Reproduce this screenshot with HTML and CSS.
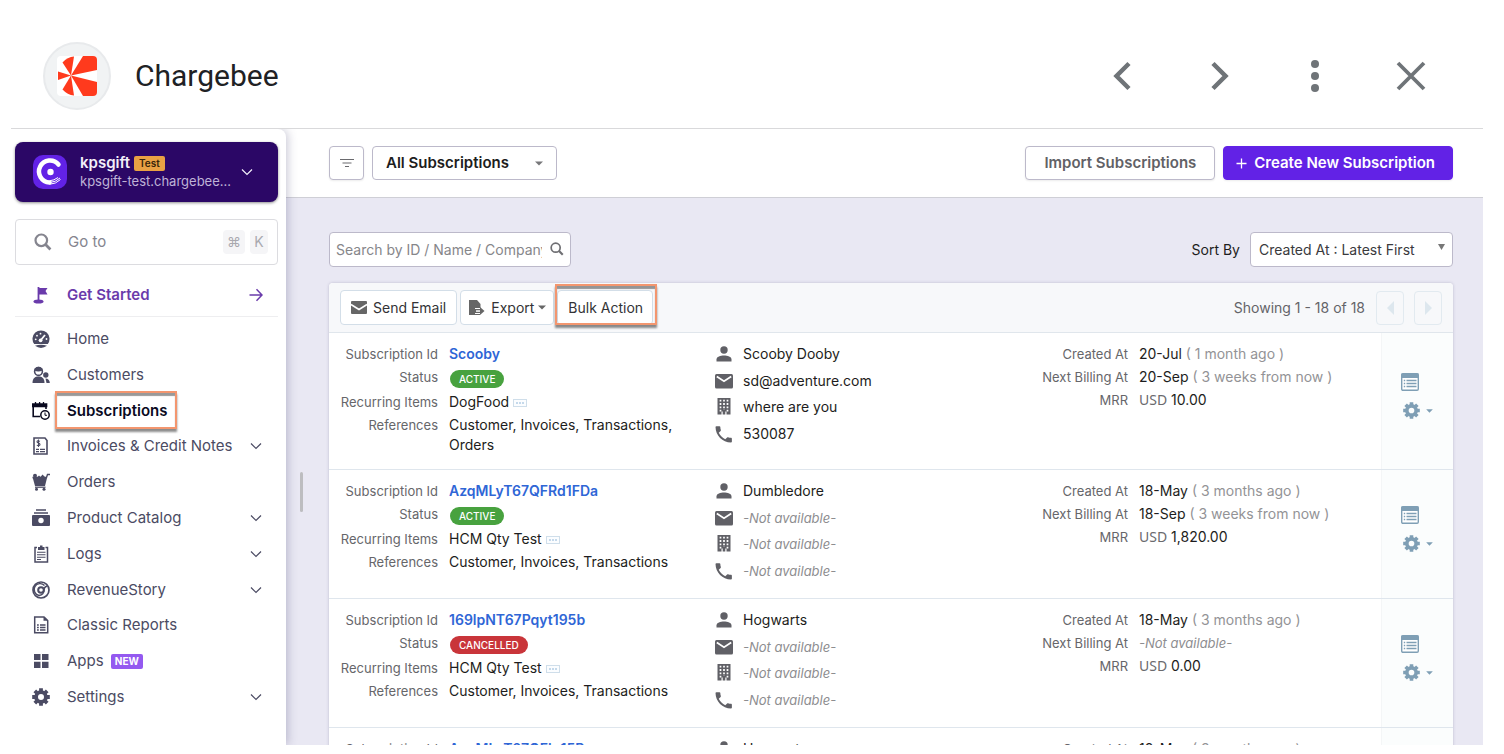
FILE: index.html
```html
<!DOCTYPE html>
<html lang="en">
<head>
<meta charset="utf-8">
<title>Chargebee</title>
<link rel="stylesheet" href="styles.css">
</head>
<body>
<svg class="defs" aria-hidden="true">
  <symbol id="chev" viewBox="0 0 12 8"><path d="M1 1.5 6 6.5 11 1.5" fill="none" stroke="currentColor" stroke-width="1.2"/></symbol>
  <symbol id="caret" viewBox="0 0 10 6"><path d="M0 0.5H10L5 5.5Z" fill="currentColor"/></symbol>
  <symbol id="search" viewBox="0 0 18 18"><circle cx="7.3" cy="7.3" r="5.8" fill="none" stroke="currentColor" stroke-width="2.200"/><path d="M11.6 11.6 16.4 16.4" stroke="currentColor" stroke-width="2.8"/></symbol>
  <symbol id="gear" viewBox="0 0 18 18"><circle cx="9" cy="9" r="4.900" fill="none" stroke="currentColor" stroke-width="3.800"/><path d="M9 0.200V4M9 14V17.800M0.200 9H4M14 9H17.800M2.800 2.800 5 5M13 13 15.200 15.200M15.200 2.800 13 5M5 13 2.800 15.200" stroke="currentColor" stroke-width="3.800"/></symbol>
  <symbol id="person" viewBox="0 0 18 18"><circle cx="9" cy="5" r="3.700" fill="currentColor"/><path d="M1.500 16.500V14.500C1.500 11.500 5.500 10.500 9 10.500S16.500 11.500 16.500 14.500V16.500Z" fill="currentColor"/></symbol>
  <symbol id="mail" viewBox="0 0 18 18"><rect x="0" y="2" width="18" height="14.500" rx="1.500" fill="currentColor"/><path d="M1.800 4.500 9 9.300 16.200 4.500" fill="none" stroke="#fff" stroke-width="1.700"/></symbol>
  <symbol id="building" viewBox="0 0 18 18"><path d="M2.500 0H15.500V16.500H11.500V13.500H10.300V16.500H7.700V13.500H6.500V16.500H2.500Z" fill="currentColor"/><path d="M5.500 1.800V13.800M9 1.800V12M12.500 1.800V13.800" stroke="#fff" stroke-width="1.700" stroke-dasharray="1.800 1.500"/></symbol>
  <symbol id="phone" viewBox="0 0 24 24"><path d="M5 1.500H1.800C1.100 1.500 0.700 2 0.700 2.700C0.700 14 10 23.300 21.300 23.300C22 23.300 22.500 22.800 22.500 22.200V18.200C22.500 17.600 22.100 17.200 21.500 17.100C20 17 18.700 16.700 17.400 16.300C17 16.200 16.500 16.300 16.200 16.600L13.700 19.100C10 17.200 6.900 14.100 5 10.400L7.500 7.900C7.800 7.600 7.900 7.100 7.800 6.700C7.300 5.400 7.100 4.100 7.100 2.700C7.100 2 6.700 1.500 6 1.500Z" fill="currentColor"/></symbol>
  <symbol id="detail" viewBox="0 0 18 18"><rect x="0.700" y="0.700" width="16.600" height="16.600" rx="1.200" fill="#fff" stroke="currentColor" stroke-width="1.400"/><path d="M0.500 0.500H17.500V5H0.500Z" fill="currentColor"/><path d="M5.500 7.500H15.500M5.500 10.500H15.500M5.500 13.500H15.500M2.800 7.500H4.200M2.800 10.500H4.200M2.800 13.500H4.200" stroke="currentColor" stroke-width="1.300"/></symbol>
  <symbol id="more" viewBox="0 0 14 8"><rect x="0.500" y="0.500" width="13" height="7" fill="#fbfdff" stroke="#cfdeea"/><path d="M3 4H5M6 4H8M9 4H11" stroke="#8fb6d8" stroke-width="1.200"/></symbol>
</svg>

<header class="app-header">
  <span class="app-logo">
    <svg width="40" height="40" viewBox="0 0 40 40"><rect width="40" height="40" rx="4" fill="#fff"/><g fill="#ff3a1d"><path d="M14 19.500 26 0H36Q40 0 40 4V14Z"/><path d="M14 19.500 40 26V36Q40 40 36 40H26Z"/><path d="M14 19.500 5.500 6.500Q10.500 1 17 0.500Z"/><path d="M14 19.500 5.500 33.500Q10.500 39 17 39.500Z"/><path d="M14 19.500 1 15.500V24Z"/></g></svg>
  </span>
  <h1 class="app-title">Chargebee</h1>
  <div class="app-actions">
    <button aria-label="Previous"><svg width="36" height="36" viewBox="0 0 36 36"><path d="M24 5.500 11.500 18 24 30.500" fill="none" stroke="currentColor" stroke-width="4.500"/></svg></button>
    <button aria-label="Next"><svg width="36" height="36" viewBox="0 0 36 36"><path d="M12 5.500 24.500 18 12 30.500" fill="none" stroke="currentColor" stroke-width="4.500"/></svg></button>
    <button aria-label="More"><svg width="36" height="36" viewBox="0 0 36 36"><g fill="currentColor"><circle cx="18" cy="6" r="4"/><circle cx="18" cy="18" r="4"/><circle cx="18" cy="30" r="4"/></g></svg></button>
    <button aria-label="Close"><svg width="36" height="36" viewBox="0 0 36 36"><path d="M5 5 31 31M31 5 5 31" stroke="currentColor" stroke-width="3.800"/></svg></button>
  </div>
</header>

<div class="workspace">
  <aside class="sidebar">
    <button class="site">
      <svg width="36" height="36" viewBox="0 0 36 36"><rect x="1" y="1" width="34" height="34" rx="10" fill="#6222e6"/><path d="M26.500 10.500A11 11 0 1 0 17.500 28.500" fill="none" stroke="#fff" stroke-width="4.500" stroke-linecap="round"/><circle cx="18.500" cy="18" r="3.200" fill="#fff"/><path d="M17.500 30.300Q24 30 28.500 25.500M17.500 28.500Q23.500 28.300 28 24M17.500 26.800Q22 26.500 26 23.500" fill="none" stroke="#fff" stroke-width="1"/></svg>
      <span class="site-text"><span class="site-name">kpsgift <span class="test-tag">Test</span></span><span class="site-url">kpsgift-test.chargebee...</span></span>
      <svg class="chev" width="12" height="8"><use href="#chev"/></svg>
    </button>
    <button class="goto">
      <svg width="18" height="18"><use href="#search"/></svg>
      <span class="grow">Go to</span>
      <kbd>⌘</kbd><kbd>K</kbd>
    </button>
    <a class="started" href="#">
      <svg width="18" height="18" viewBox="0 0 18 18"><path d="M6.500 1V14" stroke="currentColor" stroke-width="1.800"/><path d="M7 2H15.500L13.500 5 15.500 8.500H7Z" fill="currentColor"/><ellipse cx="6.500" cy="15.500" rx="5" ry="2" fill="currentColor"/></svg>
      <span class="grow">Get Started</span>
      <svg width="14" height="14" viewBox="0 0 14 14"><path d="M0.500 7H13M7.500 1.200 13 7 7.500 12.800" fill="none" stroke="currentColor" stroke-width="1.500"/></svg>
    </a>
    <nav class="nav">
      <a href="#"><svg width="18" height="18" viewBox="0 0 18 18"><path d="M2.200 14A8.500 8.500 0 1 1 15.800 14Z" fill="currentColor"/><path d="M3 15.800Q9 13.500 15 15.800Q9 20 3 15.800Z" fill="currentColor"/><path d="M8.500 10.500 13 5" stroke="#fff" stroke-width="1.800"/><circle cx="8.600" cy="10.300" r="1.900" fill="#fff"/><g fill="#fff"><circle cx="3.700" cy="9.300" r=".9"/><circle cx="5" cy="5.700" r=".9"/><circle cx="8.500" cy="3.700" r=".9"/><circle cx="14.500" cy="9" r=".9"/></g></svg><span class="grow">Home</span></a>
      <a href="#"><svg width="18" height="18" viewBox="0 0 18 18"><circle cx="6.500" cy="5.500" r="3.900" fill="none" stroke="currentColor" stroke-width="1.600"/><path d="M2.500 4.500Q6 6.500 10.500 4.500V2.500Q6.500-1 2.500 2.500Z" fill="currentColor"/><path d="M0.500 17C0.500 12 3 10.500 6.500 10.500S12.500 12 12.500 17Z" fill="currentColor"/><circle cx="13.800" cy="9" r="2.700" fill="currentColor"/><path d="M13.500 12.500Q17.500 12.500 17.800 17H14.500Z" fill="currentColor"/></svg><span class="grow">Customers</span></a>
      <a href="#" class="current"><svg width="18" height="18" viewBox="0 0 18 18"><path d="M8 14.500H1.200V3H14V7" fill="none" stroke="currentColor" stroke-width="1.600"/><path d="M0.500 2H14.700V4.500H0.500ZM3.500 0V3M7.600 0V3M11.500 0V3" fill="currentColor" stroke="currentColor" stroke-width="1.300"/><circle cx="13" cy="13" r="4.200" fill="#fff" stroke="currentColor" stroke-width="1.500"/><path d="M13 10.500V13.300H15" fill="none" stroke="currentColor"/></svg><span class="marked">Subscriptions</span></a>
      <a href="#"><svg width="18" height="18" viewBox="0 0 18 18"><path d="M2 1H13L15 3.500V17H2Z" fill="none" stroke="currentColor" stroke-width="1.600"/><path d="M4 12.300H7M8 12.300H13M4 14.600H7M8 14.600H13" stroke="currentColor" stroke-width="1.300"/><path d="M8 4.200Q5 3 5 4.700C5 6.200 8 5.500 8 7.500Q8 9.200 4.800 8.200M6.500 2.500V10" fill="none" stroke="currentColor" stroke-width="1.100"/></svg><span class="grow">Invoices &amp; Credit Notes</span><svg class="chev" width="12" height="8"><use href="#chev"/></svg></a>
      <a href="#"><svg width="18" height="18" viewBox="0 0 18 18"><path d="M0.500 4.500H14.500L15.500 1.500H18" fill="none" stroke="currentColor" stroke-width="1.400"/><path d="M0.800 5H15L13 13H3Z" fill="currentColor"/><circle cx="3" cy="2.800" r="2" fill="currentColor"/><path d="M5.500 4 7 2.500 8.500 4 10.500 1.500 13 4V5.500H5.500Z" fill="currentColor"/><path d="M3 14.200H13.500" stroke="currentColor" stroke-width="1.300"/><circle cx="4.500" cy="16.300" r="1.500" fill="currentColor"/><circle cx="12" cy="16.300" r="1.500" fill="currentColor"/></svg><span class="grow">Orders</span></a>
      <a href="#"><svg width="18" height="18" viewBox="0 0 18 18"><path d="M4 1H14M2 4H16" stroke="currentColor" stroke-width="1.600"/><rect x="0" y="6" width="18" height="11" rx="1" fill="currentColor"/><circle cx="9" cy="11.500" r="2.700" fill="#fff"/></svg><span class="grow">Product Catalog</span><svg class="chev" width="12" height="8"><use href="#chev"/></svg></a>
      <a href="#"><svg width="18" height="18" viewBox="0 0 18 18"><path d="M5 2.500H3V17H15.500V2.500H13.500" fill="none" stroke="currentColor" stroke-width="1.500"/><path d="M6 2H8V0.500H10.500V2H12.500V5H6Z" fill="currentColor"/><path d="M5 7.200H13.500M5 9.700H13.500M5 12.200H13.500M5 14.500H9" stroke="currentColor" stroke-width="1.100"/></svg><span class="grow">Logs</span><svg class="chev" width="12" height="8"><use href="#chev"/></svg></a>
      <a href="#"><svg width="18" height="18" viewBox="0 0 18 18"><g fill="none" stroke="currentColor"><circle cx="9" cy="9" r="8" stroke-width="1.700"/><circle cx="9" cy="9" r="2.800" stroke-width="2"/><path d="M12.500 4.500A6 6 0 1 0 7 14.500Q12 14 12 9Q12 6 15 5" stroke-width="1.400"/></g></svg><span class="grow">RevenueStory</span><svg class="chev" width="12" height="8"><use href="#chev"/></svg></a>
      <a href="#"><svg width="18" height="18" viewBox="0 0 18 18"><path d="M2.700 1H12L15.700 4.500V16.800H2.700Z" fill="none" stroke="currentColor" stroke-width="1.500"/><path d="M11.500 1H12.500L16 4.800H11.500Z" fill="currentColor"/><path d="M5 9H6.800M8 9H13.500M5 11.500H6.800M8 11.500H13.500M5 14H6.800M8 14H13.500" stroke="currentColor" stroke-width="1.300"/></svg><span class="grow">Classic Reports</span></a>
      <a href="#"><svg width="18" height="18" viewBox="0 0 18 18"><path d="M2 2H8.500V8H2ZM10 2H16.500V8H10ZM2 9.800H8.500V16H2ZM10 9.800H16.500V16H10Z" fill="currentColor"/></svg><span class="grow">Apps <span class="new-tag">NEW</span></span></a>
      <a href="#"><svg width="18" height="18"><use href="#gear"/></svg><span class="grow">Settings</span><svg class="chev" width="12" height="8"><use href="#chev"/></svg></a>
    </nav>
  </aside>

  <main class="main">
    <div class="resize-handle"></div>
    <div class="topbar">
      <button class="btn filter" aria-label="Filter"><svg width="14" height="10" viewBox="0 0 14 10"><path d="M0 1.500H14M2.500 5H11.500M5 8.500H9" stroke="#6a6a6e" stroke-width="1.200"/></svg></button>
      <span class="select view-select">
        <select aria-label="View"><option>All Subscriptions</option></select>
        <svg width="8" height="5"><use href="#caret"/></svg>
      </span>
      <button class="btn import">Import Subscriptions</button>
      <button class="btn create"><svg width="11" height="11" viewBox="0 0 11 11"><path d="M5.500 0.500V10.500M0.500 5.500H10.500" stroke="#fff" stroke-width="1.300"/></svg>Create New Subscription</button>
    </div>

    <div class="content">
      <div class="filters">
        <span class="search">
          <input type="text" aria-label="Search" placeholder="Search by ID / Name / Company">
          <svg width="14" height="14"><use href="#search"/></svg>
        </span>
        <label class="sort-label" for="sort">Sort By</label>
        <span class="select sort-select">
          <select id="sort"><option>Created At : Latest First</option></select>
          <svg width="7" height="6" viewBox="0 0 7 6"><path d="M0 0H7L3.500 6Z" fill="#777"/></svg>
        </span>
      </div>

      <section class="card">
        <div class="toolbar">
          <button class="tool"><svg width="16" height="13" viewBox="0 0 16 13"><rect width="16" height="13" rx="1" fill="#666"/><path d="M0 3.500 8 8.500 16 3.500" fill="none" stroke="#fff" stroke-width="1.500"/></svg>Send Email</button>
          <button class="tool"><svg width="16" height="16" viewBox="0 0 16 16"><path d="M0 0H8L11.500 4V8H6V14H11V15H0Z" fill="#666"/><path d="M6 9H11V7L15.500 11 11 15V13H6Z" fill="#666"/><path d="M7 10.300H11V11.800H7Z" fill="#fff"/></svg>Export<svg class="tool-caret" width="8" height="5"><use href="#caret"/></svg></button>
          <span class="marked"><button class="tool bulk">Bulk Action</button></span>
          <span class="showing">Showing 1 - 18 of 18</span>
          <button class="page" aria-label="Previous page"><svg width="7" height="14" viewBox="0 0 7 14"><path d="M7 0V14L0 7Z" fill="#dde7ee"/></svg></button>
          <button class="page" aria-label="Next page"><svg width="7" height="14" viewBox="0 0 7 14"><path d="M0 0V14L7 7Z" fill="#dde7ee"/></svg></button>
        </div>

        <article class="row">
          <dl class="facts">
            <dt>Subscription Id</dt><dd><a href="#">Scooby</a></dd>
            <dt>Status</dt><dd class="status"><span class="pill active">ACTIVE</span></dd>
            <dt>Recurring Items</dt><dd>DogFood <svg width="14" height="8"><use href="#more"/></svg></dd>
            <dt>References</dt><dd>Customer, Invoices, Transactions, Orders</dd>
          </dl>
          <ul class="contact">
            <li><svg width="18" height="18"><use href="#person"/></svg>Scooby Dooby</li>
            <li><svg width="18" height="18"><use href="#mail"/></svg>sd@adventure.com</li>
            <li><svg width="18" height="18"><use href="#building"/></svg>where are you</li>
            <li><svg width="18" height="18"><use href="#phone"/></svg>530087</li>
          </ul>
          <dl class="facts dates">
            <dt>Created At</dt><dd>20-Jul <i>( 1 month ago )</i></dd>
            <dt>Next Billing At</dt><dd>20-Sep <i>( 3 weeks from now )</i></dd>
            <dt>MRR</dt><dd><b>USD</b> 10.00</dd>
          </dl>
          <div class="row-actions">
            <button aria-label="Details"><svg width="18" height="18"><use href="#detail"/></svg></button>
            <button aria-label="Options"><svg width="17" height="17"><use href="#gear"/></svg><svg width="7" height="4"><use href="#caret"/></svg></button>
          </div>
        </article>

        <article class="row">
          <dl class="facts">
            <dt>Subscription Id</dt><dd><a href="#">AzqMLyT67QFRd1FDa</a></dd>
            <dt>Status</dt><dd class="status"><span class="pill active">ACTIVE</span></dd>
            <dt>Recurring Items</dt><dd>HCM Qty Test <svg width="14" height="8"><use href="#more"/></svg></dd>
            <dt>References</dt><dd>Customer, Invoices, Transactions</dd>
          </dl>
          <ul class="contact">
            <li><svg width="18" height="18"><use href="#person"/></svg>Dumbledore</li>
            <li><svg width="18" height="18"><use href="#mail"/></svg><em>-Not available-</em></li>
            <li><svg width="18" height="18"><use href="#building"/></svg><em>-Not available-</em></li>
            <li><svg width="18" height="18"><use href="#phone"/></svg><em>-Not available-</em></li>
          </ul>
          <dl class="facts dates">
            <dt>Created At</dt><dd>18-May <i>( 3 months ago )</i></dd>
            <dt>Next Billing At</dt><dd>18-Sep <i>( 3 weeks from now )</i></dd>
            <dt>MRR</dt><dd><b>USD</b> 1,820.00</dd>
          </dl>
          <div class="row-actions">
            <button aria-label="Details"><svg width="18" height="18"><use href="#detail"/></svg></button>
            <button aria-label="Options"><svg width="17" height="17"><use href="#gear"/></svg><svg width="7" height="4"><use href="#caret"/></svg></button>
          </div>
        </article>

        <article class="row">
          <dl class="facts">
            <dt>Subscription Id</dt><dd><a href="#">169lpNT67Pqyt195b</a></dd>
            <dt>Status</dt><dd class="status"><span class="pill cancelled">CANCELLED</span></dd>
            <dt>Recurring Items</dt><dd>HCM Qty Test <svg width="14" height="8"><use href="#more"/></svg></dd>
            <dt>References</dt><dd>Customer, Invoices, Transactions</dd>
          </dl>
          <ul class="contact">
            <li><svg width="18" height="18"><use href="#person"/></svg>Hogwarts</li>
            <li><svg width="18" height="18"><use href="#mail"/></svg><em>-Not available-</em></li>
            <li><svg width="18" height="18"><use href="#building"/></svg><em>-Not available-</em></li>
            <li><svg width="18" height="18"><use href="#phone"/></svg><em>-Not available-</em></li>
          </ul>
          <dl class="facts dates">
            <dt>Created At</dt><dd>18-May <i>( 3 months ago )</i></dd>
            <dt>Next Billing At</dt><dd><em>-Not available-</em></dd>
            <dt>MRR</dt><dd><b>USD</b> 0.00</dd>
          </dl>
          <div class="row-actions">
            <button aria-label="Details"><svg width="18" height="18"><use href="#detail"/></svg></button>
            <button aria-label="Options"><svg width="17" height="17"><use href="#gear"/></svg><svg width="7" height="4"><use href="#caret"/></svg></button>
          </div>
        </article>

        <article class="row">
          <dl class="facts">
            <dt>Subscription Id</dt><dd><a href="#">AzqMLyT67QFig15R</a></dd>
          </dl>
          <ul class="contact">
            <li><svg width="18" height="18"><use href="#person"/></svg>Hogwarts</li>
          </ul>
          <dl class="facts dates">
            <dt>Created At</dt><dd>18-May <i>( 3 months ago )</i></dd>
          </dl>
          <div class="row-actions"></div>
        </article>
      </section>
    </div>
  </main>
</div>
</body>
</html>
```
FILE: styles.css
```css
* { box-sizing: border-box; margin: 0; padding: 0; }
body {
  height: 100vh;
  padding: 24px 21px 9px 11px;
  display: flex;
  flex-direction: column;
  overflow: hidden;
  background: #fff;
  color: #1d1d20;
  font: 14px/20px Inter, "Liberation Sans", sans-serif;
}
button, input, select { font: inherit; color: inherit; }
button { background: none; border: 0; }
a { text-decoration: none; color: inherit; }
svg { flex: none; }
.defs { position: absolute; width: 0; height: 0; }
.grow { flex: 1; }

.app-header {
  flex: none;
  display: flex;
  align-items: center;
  height: 105px;
  padding: 0 54px 0 32px;
  border-bottom: 1px solid #d9d9db;
}
.app-logo {
  display: grid;
  place-items: center;
  width: 68px;
  height: 68px;
  border: 2px solid #e8eaec;
  border-radius: 50%;
  background: #f1f3f4;
}
.app-title {
  flex: 1;
  margin-left: 24px;
  color: #202124;
  font: 400 30px/40px Roboto, sans-serif;
}
.app-actions { display: flex; gap: 60px; color: #6f7478; }
.app-actions button, .app-actions svg { display: block; }

.workspace { flex: 1; min-height: 0; display: flex; }
.sidebar {
  flex: none;
  width: 275px;
  padding: 13px 8px 0 4px;
  position: relative;
  z-index: 1;
  background: #fff;
  border-top-right-radius: 8px;
  box-shadow: 2px 0 10px rgba(70, 65, 110, .28);
  clip-path: inset(0 -16px 0 0);
  color: #4b4b63;
}
.site {
  display: flex;
  align-items: center;
  width: 100%;
  height: 60px;
  padding: 0 25px 0 17px;
  border-radius: 8px;
  background: #2b0766;
  box-shadow: 0 1px 3px rgba(0, 0, 0, .45);
  color: #f3f0fa;
  text-align: left;
}
.site-text { flex: 1; margin-left: 12px; }
.site-name { display: flex; align-items: center; gap: 4px; font-size: 15px; line-height: 18px; font-weight: 600; }
.test-tag {
  padding: 0 5px;
  border-radius: 2px;
  background: #e9a144;
  color: #38250a;
  font-size: 10px;
  line-height: 15px;
}
.site-url { display: block; color: #bfb3d6; font-size: 13px; line-height: 18px; }
.goto {
  display: flex;
  align-items: center;
  width: 100%;
  height: 46px;
  margin-top: 17px;
  padding: 0 9px 0 18px;
  border: 1px solid #dcdce0;
  border-radius: 4px;
  color: #85858f;
  font-size: 15px;
  text-align: left;
}
.goto .grow { margin-left: 16px; }
.goto kbd {
  min-width: 18px;
  margin-left: 5px;
  padding: 2px 4px;
  border-radius: 4px;
  background: #f5f5f7;
  color: #a9a9af;
  font: 14px/20px Inter, "DejaVu Sans", sans-serif;
  text-align: center;
}
.started {
  display: flex;
  align-items: center;
  height: 43px;
  margin-top: 9px;
  padding: 0 15px 0 17px;
  border-bottom: 1px solid #eeeef0;
  color: #6a3bab;
  font-size: 15px;
  font-weight: 600;
}
.started .grow, .nav .grow, .nav .marked { margin-left: 17px; }
.nav {
  display: grid;
  grid-auto-rows: 1fr;
  height: 394px;
  margin-top: 4px;
  font-size: 15px;
}
.nav a { display: flex; align-items: center; padding: 0 16px 0 17px; }
.nav .current { color: #0a0a1f; font-weight: 600; }
.new-tag {
  display: inline-block;
  margin-left: 3px;
  padding: 0 4px;
  border-radius: 2px;
  background: #9459f0;
  color: #fff;
  font-size: 10px;
  line-height: 15px;
  font-weight: 700;
  vertical-align: 1px;
}
.marked { position: relative; }
.marked::after {
  content: "";
  position: absolute;
  inset: -10px -10px -8px -12px;
  border: 2px solid #f3966f;
  box-shadow: 0 3px 2px rgba(0, 0, 0, .45), inset 0 3px 1px rgba(0, 0, 0, .4);
  pointer-events: none;
}

.main { flex: 1; min-width: 0; position: relative; overflow: hidden; background: #e9e8f3; }
.resize-handle {
  position: absolute;
  left: 14px;
  top: 343px;
  width: 3px;
  height: 40px;
  border-radius: 2px;
  background: #bdbdc0;
}
.topbar {
  display: flex;
  align-items: center;
  gap: 8px;
  padding: 17px 30px 17px 43px;
  border-bottom: 1px solid #cfcfd6;
  background: #fff;
  font-size: 15px;
}
.btn {
  display: flex;
  align-items: center;
  justify-content: center;
  height: 34px;
  border: 1px solid #bcb9ca;
  border-radius: 4px;
  background: #fff;
  box-shadow: 0 1px 2px rgba(0, 0, 0, .08);
  font-weight: 600;
}
.filter { width: 35px; }
.select { position: relative; }
.select select {
  width: 100%;
  border: 1px solid #bcb9ca;
  border-radius: 4px;
  background: #fff;
  appearance: none;
}
.select svg { position: absolute; pointer-events: none; }
.view-select { width: 185px; }
.view-select select { height: 34px; padding-left: 13px; font-weight: 600; display: block; }
.view-select svg { right: 14px; top: 15px; color: #77777a; }
.import { margin-left: auto; padding: 0 18px; color: #616166; }
.create { gap: 7px; padding: 0 17px 0 12px; border-color: #6222e6; background: #6222e6; color: #fff; }

.content { padding: 34px 30px 0 43px; }
.filters { display: flex; align-items: center; }
.search { position: relative; width: 242px; }
.search input {
  display: block;
  width: 100%;
  height: 35px;
  padding: 0 28px 0 6px;
  border: 1px solid #bcb9ca;
  border-radius: 4px;
  background: #fff;
}
.search input::placeholder { color: #86868a; opacity: 1; }
.search svg { position: absolute; right: 7px; top: 10px; color: #6f6f73; }
.sort-label { margin: 0 10px 0 auto; }
.sort-select { width: 203px; }
.sort-select select { display: block; height: 35px; padding-left: 8px; color: #3a3a3d; }
.sort-select svg { right: 8px; top: 12px; }

.card {
  margin-top: 16px;
  border-radius: 4px 4px 0 0;
  background: #fff;
  box-shadow: 0 0 3px rgba(80, 75, 120, .3);
}
.toolbar {
  display: flex;
  align-items: center;
  height: 50px;
  padding: 0 11px;
  border-bottom: 1px solid #e0e6ec;
  border-radius: 4px 4px 0 0;
  background: #f7f8fa;
}
.tool {
  display: flex;
  align-items: center;
  gap: 6px;
  height: 35px;
  margin-right: 3px;
  padding: 0 10px;
  border: 1px solid #d3dee8;
  border-radius: 4px;
  background: #fff;
  color: #333336;
}
.tool + .tool { padding: 0 7px 0 8px; }
.tool-caret { margin-left: -2px; color: #666; }
.toolbar .bulk { margin: 0; padding: 0 9px 0 10px; }
.toolbar .marked::after { inset: -6px -4px 0 -2px; }
.showing { margin: 0 11px 0 auto; color: #646468; }
.page {
  display: grid;
  place-items: center;
  width: 28px;
  height: 34px;
  border: 1px solid #e2eaf0;
  border-radius: 4px;
}
.page + .page { margin-left: 10px; }

.row {
  display: grid;
  grid-template-columns: 386fr 297fr 369fr 72px;
  border-bottom: 1px solid #dfe6ed;
}
.facts {
  display: grid;
  grid-template-columns: 109px 1fr;
  column-gap: 11px;
  row-gap: 3px;
  align-content: start;
  padding: 11px 30px 14px 0;
}
.facts dt { color: #66666a; font-size: 13px; text-align: right; }
.facts a { color: #2f66d6; font-weight: 600; }
.facts i { color: #939396; font-style: normal; }
.facts b { color: #6a6a6e; font: 400 14px/20px "Noto Sans", sans-serif; }
.status { height: 22px; padding: 3px 0 0 1px; }
.pill {
  display: block;
  width: max-content;
  padding: 0 9px;
  border-radius: 9px;
  color: #fff;
  font-size: 10px;
  line-height: 18px;
  font-weight: 500;
}
.active { background: #48a23f; }
.cancelled { background: #c9353a; }
.contact {
  display: grid;
  grid-template-rows: repeat(4, 1fr);
  align-self: start;
  height: 106px;
  margin: 8px 0 14px;
  list-style: none;
}
.contact li { display: flex; align-items: center; gap: 10px; }
.contact svg { color: #606066; }
em { color: #8d8d90; font-size: 13px; font-style: italic; }
.dates { grid-template-columns: 116px 1fr; padding-right: 0; }
.row-actions {
  display: flex;
  flex-direction: column;
  justify-content: center;
  gap: 11px;
  padding: 0 0 10px 19px;
  border-left: 1px solid #f4f6f7;
  background: #fbfdfd;
  color: #7f9fb5;
}
.row-actions button { display: flex; align-items: center; gap: 6px; }
.row-actions button + button { padding-left: 2px; }
```
